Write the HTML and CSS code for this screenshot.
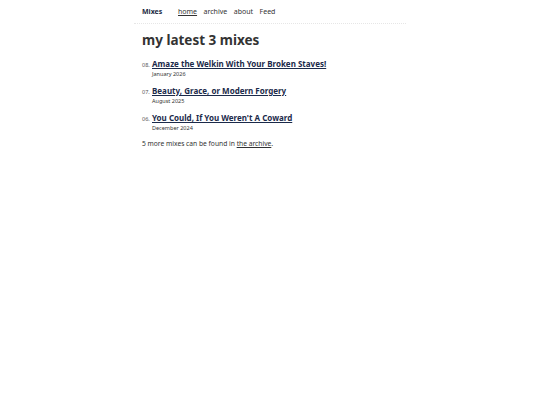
FILE: index.html
```html
<!DOCTYPE html>
<html>
<head>
<meta charset="utf-8">
<link rel="stylesheet" href="styles.css">
</head>
<body>
<div class="page">
  <header class="site-header">
    <a class="brand" href="#">Mixes</a>
    <nav class="nav">
      <a class="nav-link current" href="#">home</a>
      <a class="nav-link" href="#">archive</a>
      <a class="nav-link" href="#">about</a>
      <a class="nav-link" href="#">Feed</a>
    </nav>
  </header>
  <main class="content">
    <h1 class="title">my latest 3 mixes</h1>
    <ol class="mixes">
      <li class="mix">
        <div class="mix-head"><span class="num">08.</span><a class="mix-title" href="#">Amaze the Welkin With Your Broken Staves!</a></div>
        <div class="date">January 2026</div>
      </li>
      <li class="mix">
        <div class="mix-head"><span class="num">07.</span><a class="mix-title" href="#">Beauty, Grace, or Modern Forgery</a></div>
        <div class="date">August 2025</div>
      </li>
      <li class="mix">
        <div class="mix-head"><span class="num">06.</span><a class="mix-title" href="#">You Could, If You Weren't A Coward</a></div>
        <div class="date">December 2024</div>
      </li>
    </ol>
    <p class="more">5 more mixes can be found in <a href="#">the archive</a>.</p>
  </main>
</div>
</body>
</html>
```

FILE: styles.css
```css
* { box-sizing: border-box; }
html, body { margin: 0; padding: 0; background: #fff; }
body { font-family: "Noto Sans", "Open Sans", sans-serif; color: #333; }
.page { width: 272px; margin: 0 auto; }
.site-header {
  display: flex; align-items: center; height: 24px; padding: 0 8px 1px;
  border-bottom: 1px dotted #e6e6e6;
}
.brand { font-size: 7px; font-weight: 700; color: #1b2a3f; text-decoration: none; width: 36px; }
.nav { display: flex; gap: 6.5px; }
.nav-link { font-size: 7px; color: #333; text-decoration: none; }
.nav-link.current { text-decoration: underline; }
.content { padding: 6px 8px 0; }
.title { font-size: 13.5px; font-weight: 700; color: #333; margin: 0 0 8px; line-height: 20px; }
.mixes { list-style: none; margin: 0; padding: 0; }
.mix { margin-bottom: 7px; }
.mix-head { display: flex; align-items: baseline; }
.num { font-size: 5.5px; color: #555; width: 10px; }
.mix-title { font-size: 8px; font-weight: 700; color: #1b2a4a; text-decoration: underline; line-height: 12px; }
.date { font-size: 5.5px; color: #333; padding-left: 10px; line-height: 8px; }
.more { font-size: 6.7px; color: #333; margin: 4px 0 0; }
.more a { color: #333; }
```
